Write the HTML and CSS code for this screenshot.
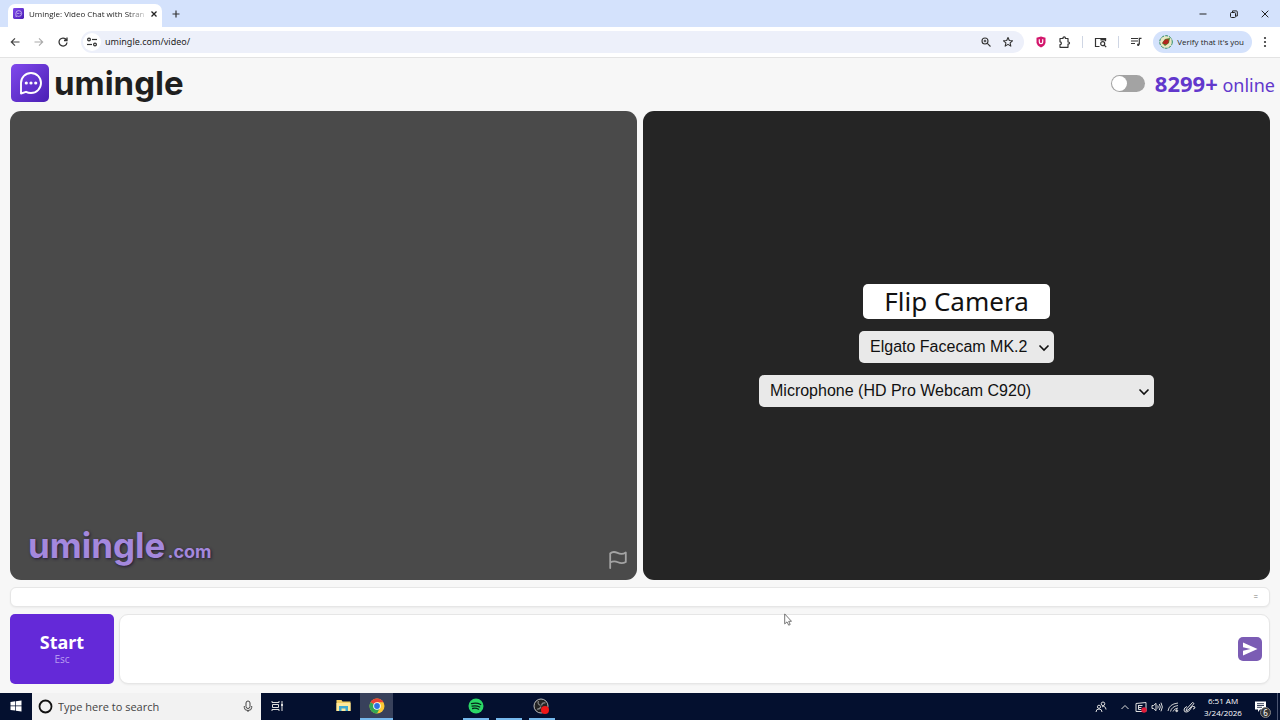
FILE: index.html
```html
<!DOCTYPE html>
<html lang="en">
<head>
<meta charset="utf-8">
<meta name="viewport" content="width=device-width, initial-scale=1">
<title>Umingle: Video Chat with Strangers</title>
<link rel="stylesheet" href="styles.css">
</head>
<body>
<svg class="defs" width="0" height="0" aria-hidden="true">
  <defs>
    <linearGradient id="brand" x1="0" y1="0" x2="1" y2="1"><stop offset="0" stop-color="#8049ec"/><stop offset="1" stop-color="#4a1fb4"/></linearGradient>
    <symbol id="logo" viewBox="0 0 38 38">
      <rect width="38" height="38" rx="5" fill="url(#brand)"/>
      <path d="M10 29.500V19a10 10 0 1 1 10 10c-2 0-3.500-.4-5-1.200z" fill="none" stroke="#fff" stroke-width="1.900" stroke-linejoin="round"/>
      <circle cx="15.300" cy="19" r="1.600" fill="#fff"/><circle cx="20" cy="19" r="1.600" fill="#fff"/><circle cx="24.700" cy="19" r="1.600" fill="#fff"/>
    </symbol>
  </defs>
</svg>

<header class="tabstrip">
  <div class="tab">
    <svg class="favicon" aria-hidden="true"><use href="#logo"/></svg>
    <span class="tab-title">Umingle: Video Chat with Stran</span>
    <button class="icon-btn tab-close" aria-label="Close tab"><svg width="8" height="8" viewBox="0 0 8 8"><path d="M1.500 1.500l5 5M6.500 1.500l-5 5" stroke="#222" stroke-width="1.300"/></svg></button>
  </div>
  <button class="icon-btn new-tab" aria-label="New tab"><svg width="10" height="10" viewBox="0 0 10 10"><path d="M5 1.500v7M1.500 5h7" stroke="#333" stroke-width="1.200"/></svg></button>
  <div class="window-controls">
    <button class="icon-btn" aria-label="Minimize"><svg width="10" height="10" viewBox="0 0 10 10"><path d="M1.500 5h7" stroke="#222"/></svg></button>
    <button class="icon-btn" aria-label="Restore"><svg width="10" height="10" viewBox="0 0 10 10" fill="none" stroke="#222"><rect x="1.500" y="3.500" width="5" height="5" rx="1"/><path d="M3.500 3V1.900h3.800a1 1 0 0 1 1 1V7H7"/></svg></button>
    <button class="icon-btn" aria-label="Close"><svg width="10" height="10" viewBox="0 0 10 10"><path d="M1.700 1.700l6.600 6.600M8.300 1.700L1.700 8.300" stroke="#222"/></svg></button>
  </div>
</header>

<nav class="toolbar" aria-label="Browser toolbar">
  <button class="icon-btn nav-btn" aria-label="Back"><svg width="12" height="12" viewBox="0 0 12 12" fill="none" stroke="#444" stroke-width="1.200"><path d="M10.500 6H2.500M6 2.300L2.300 6 6 9.700"/></svg></button>
  <button class="icon-btn nav-btn" aria-label="Forward"><svg width="12" height="12" viewBox="0 0 12 12" fill="none" stroke="#aaa" stroke-width="1.100"><path d="M1.500 6h8M6 2.300L9.700 6 6 9.700"/></svg></button>
  <button class="icon-btn nav-btn" aria-label="Reload"><svg width="12" height="12" viewBox="0 0 12 12" fill="none" stroke="#333" stroke-width="1.300"><path d="M9.400 3.900A4 4 0 1 0 10 6.500M10 1.500v3H7"/></svg></button>
  <div class="omnibox">
    <button class="icon-btn site-info" aria-label="Site information"><svg width="12" height="12" viewBox="0 0 12 12" fill="none" stroke="#333" stroke-width="1.200"><circle cx="3" cy="3.500" r="1.400"/><path d="M6 3.500h5"/><circle cx="9" cy="8.500" r="1.400"/><path d="M1 8.500h5"/></svg></button>
    <input class="url" type="text" aria-label="Address" value="umingle.com/video/">
    <button class="icon-btn" aria-label="Zoom"><svg width="12" height="12" viewBox="0 0 12 12" fill="none" stroke="#333" stroke-width="1.100"><circle cx="5" cy="5" r="3"/><path d="M7.300 7.300L10.500 10.500M5 3.700v2.600M3.700 5h2.600"/></svg></button>
    <button class="icon-btn" aria-label="Bookmark"><svg width="12" height="12" viewBox="0 0 12 12" fill="none" stroke="#333" stroke-width="1.100" stroke-linejoin="round"><path d="M6 1.500l1.300 3 3.200.3-2.400 2.100.7 3.200L6 8.400l-2.800 1.700.7-3.200L1.500 4.800l3.200-.3z"/></svg></button>
  </div>
  <div class="extensions">
    <button class="icon-btn" aria-label="U extension"><svg width="12" height="12" viewBox="0 0 12 12"><path d="M6 .5l4.500 1.300v4.700Q10 9.800 6 11.500 2 9.800 1.500 6.500V1.800z" fill="#d3176c"/><path d="M4.300 3.300v2.700a1.700 1.700 0 0 0 3.400 0V3.300" fill="none" stroke="#fff" stroke-width="1.200"/></svg></button>
    <button class="icon-btn" aria-label="Extensions"><svg width="13" height="13" viewBox="0 0 13 13" fill="none" stroke="#333" stroke-width="1.200" stroke-linejoin="round"><path d="M2 2.500h3V2a1.200 1.200 0 0 1 2.400 0v.5H10V6h.5a1 1 0 0 1 0 2H10v3.300H2V8.600a1.400 1.400 0 0 0 0-2.800z"/></svg></button>
    <span class="rule"></span>
    <button class="icon-btn" aria-label="Search in page"><svg width="13" height="13" viewBox="0 0 13 13" fill="none" stroke="#333" stroke-width="1.200"><path d="M5.500 10.500h-4v-8h10v2.800"/><path d="M7 2.500h4.500V4H7z" fill="#333"/><circle cx="8.700" cy="7.700" r="2"/><path d="M10.200 9.200l2 2"/></svg></button>
    <span class="rule"></span>
    <button class="icon-btn" aria-label="Media controls"><svg width="12" height="12" viewBox="0 0 12 12" fill="none" stroke="#333" stroke-width="1.200"><path d="M1 2.500h7M1 5h7M1 7.500h4M9.300 8.500V2.300h2.200"/><circle cx="8.200" cy="8.700" r="1.200" fill="#333" stroke="none"/></svg></button>
    <button class="verify"><svg width="14" height="14" viewBox="0 0 14 14"><circle cx="7" cy="7" r="6.300" fill="#e9e7c4" stroke="#2f8c68" stroke-dasharray="3 1"/><path d="M3 8l3-4 5-1-1 5-4 3z" fill="#4c842d"/><path d="M3.500 8.500q2-5 6-4 1 4-2.500 5z" fill="#b3261e"/></svg><span>Verify that it's you</span></button>
    <button class="icon-btn" aria-label="Menu"><svg width="4" height="12" viewBox="0 0 4 12" fill="#333"><circle cx="2" cy="2" r="1.100"/><circle cx="2" cy="6" r="1.100"/><circle cx="2" cy="10" r="1.100"/></svg></button>
  </div>
</nav>

<main class="app">
  <header class="site-header">
    <a class="brand" href="#"><svg class="brand-mark" aria-hidden="true"><use href="#logo"/></svg><span class="wordmark">umingle</span></a>
    <div class="status">
      <input class="switch" type="checkbox" role="switch" aria-label="Dark mode">
      <span class="online"><strong>8299+</strong> online</span>
    </div>
  </header>

  <section class="videos">
    <div class="video stranger">
      <span class="watermark">umingle<small>.com</small></span>
      <button class="icon-btn report" aria-label="Report"><svg width="18" height="18" viewBox="0 0 18 18" fill="none" stroke="#a3a3a3" stroke-width="1.800" stroke-linecap="round" stroke-linejoin="round"><path d="M1.200 17V2.500Q4-.2 8.500 1.900T16.800 1.500V11Q13 13.200 9 11.300T1.200 11.500"/></svg></button>
    </div>
    <div class="video self">
      <button class="flip">Flip Camera</button>
      <div class="picker">
        <select aria-label="Camera"><option>Elgato Facecam MK.2</option></select>
        <svg class="chevron" width="12" height="8" viewBox="0 0 12 8" aria-hidden="true"><path d="M1.500 1.500L6 6l4.500-4.500"/></svg>
      </div>
      <div class="picker picker-wide">
        <select aria-label="Microphone"><option>Microphone (HD Pro Webcam C920)</option></select>
        <svg class="chevron" width="12" height="8" viewBox="0 0 12 8" aria-hidden="true"><path d="M1.500 1.500L6 6l4.500-4.500"/></svg>
      </div>
    </div>
  </section>

  <section class="log" aria-label="Chat log"><button class="grip" aria-label="Resize chat">=</button></section>

  <form class="composer">
    <button class="start" type="button"><span class="start-label">Start</span><span class="start-key">Esc</span></button>
    <div class="message">
      <textarea aria-label="Message"></textarea>
      <button class="send" type="button" aria-label="Send"><svg width="16" height="14" viewBox="0 0 16 14"><path d="M1 .5L15.500 7 1 13.500V8.700L8.500 7 1 5.300z" fill="#fff"/></svg></button>
    </div>
  </form>
</main>

<footer class="taskbar">
  <button class="task start-menu" aria-label="Windows"><svg width="12" height="12" viewBox="0 0 12 12" fill="#fff"><path d="M.5 2l4.700-.7v4.300H.5zM5.900 1.200L11.500.4v5.200H5.900zM.5 6.300h4.700v4.300L.5 10zM5.900 6.300h5.600v5.200l-5.600-.8z"/></svg></button>
  <label class="search">
    <svg width="15" height="15" viewBox="0 0 15 15"><circle cx="7.500" cy="7.500" r="6" fill="none" stroke="#111" stroke-width="1.800"/></svg>
    <input type="text" placeholder="Type here to search" aria-label="Search">
    <svg width="10" height="13" viewBox="0 0 10 13" fill="none" stroke="#444"><rect x="3" y="1" width="4" height="7.500" rx="2"/><path d="M1.300 6v1.500a3.700 3 0 0 0 7.400 0V6M5 10.500V12"/></svg>
  </label>
  <div class="tasks">
    <button class="task" aria-label="Task view"><svg width="13" height="12" viewBox="0 0 13 12" fill="none" stroke="#ddd"><path d="M1 1v1.500h7V1M1 11V9.500h7V11M1.500 4.500h6v3h-6zM11 1v10"/><path d="M10 4h2v2h-2z" fill="#ddd" stroke="none"/></svg></button>
    <span class="task"></span>
    <button class="task" aria-label="File Explorer"><svg width="15" height="13" viewBox="0 0 15 13"><path d="M.5 1h5l1 1.500h8V12H.5z" fill="#f4cf62"/><path d="M.5 4h14v8H.5z" fill="#ffe99a"/><path d="M3 12V7h9v5h-2.500V9.500h-4V12z" fill="#3fa9d0"/></svg></button>
    <button class="task running active" aria-label="Chrome"><svg width="16" height="16" viewBox="0 0 16 16"><circle cx="8" cy="8" r="7.500" fill="#fcc934"/><path d="M8 8L1.500 4.250A7.500 7.500 0 0 1 14.500 4.250H8z" fill="#ea4335"/><path d="M8 8L1.500 4.250A7.500 7.500 0 0 0 8 15.500L11 9.700z" fill="#34a853"/><circle cx="8" cy="8" r="3.800" fill="#fff"/><circle cx="8" cy="8" r="2.900" fill="#2f73e0"/></svg></button>
    <span class="task"></span>
    <span class="task"></span>
    <button class="task running" aria-label="Spotify"><svg width="16" height="16" viewBox="0 0 16 16"><circle cx="8" cy="8" r="7.500" fill="#2bd866"/><path d="M3.500 5.700q5-1.400 9.200.8M4 8.200q4.200-1.100 7.700.8M4.600 10.500q3.200-.8 6 .7" fill="none" stroke="#06251a" stroke-width="1.300" stroke-linecap="round"/></svg></button>
    <span class="task running"></span>
    <button class="task running" aria-label="OBS"><svg width="17" height="16" viewBox="0 0 17 16"><circle cx="8" cy="8" r="7" fill="#222" stroke="#bbb"/><path d="M7.500 7.500Q4 6 5.500 3M8.500 7.500q1-3.500 4-2.500M8 8.500Q7 11.500 4 11" fill="none" stroke="#888" stroke-width="1.200"/><circle cx="12" cy="12" r="4" fill="#f01818"/></svg></button>
  </div>
  <div class="tray">
    <button class="tray-btn people" aria-label="People"><svg width="12" height="12" viewBox="0 0 12 12" fill="none" stroke="#ddd"><circle cx="8" cy="2.800" r="1.800"/><circle cx="4" cy="5.800" r="1.600"/><path d="M1 11q0-3 3-3t3 3M7 5.800q3.500-1.300 4 2.700"/></svg></button>
    <button class="tray-btn" aria-label="Show hidden icons"><svg width="10" height="8" viewBox="0 0 10 8" fill="none" stroke="#ddd"><path d="M1.500 6L5 2.500 8.500 6"/></svg></button>
    <button class="tray-btn" aria-label="Capture"><svg width="12" height="12" viewBox="0 0 12 12" fill="none" stroke="#ddd"><path d="M1 2.500l10-1v9H1zM3.500 4.500h4M3.500 6.500h3M3.500 4v4.500h3"/><circle cx="9" cy="9" r="2.700" fill="#e01b38" stroke="none"/></svg></button>
    <button class="tray-btn" aria-label="Volume"><svg width="12" height="12" viewBox="0 0 12 12" fill="none" stroke="#ddd"><path d="M1 4.500h1.500L5 2.300v7.400L2.500 7.500H1zM6.700 4.500q1 1.500 0 3M8.300 3q2 3 0 6M10 1.700q2.700 4.300 0 8.600"/></svg></button>
    <button class="tray-btn" aria-label="Network"><svg width="12" height="12" viewBox="0 0 12 12" fill="none" stroke="#ccc"><path d="M1 10Q2 3 11 2M3.500 10.500Q4.500 5.500 11 4.500M6 10.500Q7 7.500 11 7"/><circle cx="9.700" cy="9.700" r="1" fill="#ddd"/></svg></button>
    <button class="tray-btn" aria-label="Pen"><svg width="13" height="12" viewBox="0 0 13 12" fill="none" stroke="#ddd"><path d="M3.500 8L9.500 1.500l1.500 1L5.200 9 3 9.500zM4 5.500Q1 6.500 1 9t3 2q3-1 4-4t4-1q0 2-2 2"/></svg></button>
    <div class="clock"><time>6:51 AM</time><span>3/24/2026</span></div>
    <button class="tray-btn notices" aria-label="Notifications"><svg width="13" height="13" viewBox="0 0 13 13"><path d="M1 1.500h11v8H6L4 12V9.500H1z" fill="#fff"/><path d="M3 3.700h7M3 5.500h7M3 7.300h5" stroke="#06112f" stroke-width=".8"/></svg><span class="badge">6</span></button>
    <span class="peek"></span>
  </div>
</footer>

<svg class="pointer" width="8" height="13" viewBox="0 0 8 13" aria-hidden="true"><path d="M.7.900v10l2.300-2 1.700 3.300 1.500-.7-1.500-3.200h2.800z" fill="#fff" stroke="#666" stroke-width=".9"/></svg>
</body>
</html>
```
FILE: styles.css
```css
* { box-sizing: border-box; }

body {
  margin: 0;
  min-height: 100vh;
  display: flex;
  flex-direction: column;
  background: #f7f7f7;
  color: #1f1f1f;
  font-family: "Noto Sans", "Open Sans", sans-serif;
}

button, input, select, textarea { font: inherit; color: inherit; border: 0; margin: 0; padding: 0; background: none; }
svg { display: block; flex: none; }
.defs { position: absolute; }
.icon-btn { display: grid; place-items: center; flex: none; }

/* Browser frame */
.tabstrip {
  display: flex;
  align-items: center;
  height: 27px;
  padding: 0 10px 0 8px;
  background: #d4e2fc;
}
.tab {
  display: flex;
  align-items: center;
  align-self: flex-end;
  gap: 5px;
  width: 154px;
  height: 23px;
  padding: 0 6px 4px 5px;
  border-radius: 7px 7px 0 0;
  background: #fff;
}
.favicon { width: 11px; height: 11px; }
.tab-title {
  flex: 1;
  white-space: nowrap;
  font: 8px/12px "Open Sans", sans-serif;
  -webkit-mask-image: linear-gradient(90deg, #000 85%, #0003);
  mask-image: linear-gradient(90deg, #000 85%, #0003);
}
.new-tab { margin-left: 9px; }
.window-controls { display: flex; gap: 21px; margin-left: auto; }

.toolbar {
  display: flex;
  align-items: center;
  height: 31px;
  padding: 0 13px 0 9px;
  background: #fff;
  border-bottom: 1px solid #e3e3e3;
}
.nav-btn { width: 12px; margin-right: 12px; }
.omnibox {
  flex: 1;
  display: flex;
  align-items: center;
  gap: 10px;
  height: 22px;
  padding: 0 10px 0 2px;
  border-radius: 11px;
  background: #edf0fa;
}
.site-info { width: 18px; height: 18px; border-radius: 50%; background: #fff; }
.url { flex: 1; min-width: 0; margin-left: -6px; font-size: 9px; line-height: 14px; }
.extensions { display: flex; align-items: center; gap: 11px; padding-left: 11px; }
.rule { width: 1px; height: 12px; background: #cfd6e4; }
.verify {
  display: flex;
  align-items: center;
  gap: 4px;
  height: 22px;
  padding: 0 8px 0 6px;
  border-radius: 11px;
  background: #d4e2fc;
  font: 8px/12px "Open Sans", sans-serif;
  white-space: nowrap;
}

/* Page */
.app {
  flex: 1;
  display: flex;
  flex-direction: column;
  padding: 0 10px 9px;
}
.site-header {
  display: flex;
  align-items: center;
  justify-content: space-between;
  height: 53px;
  margin-right: -5px;
}
.brand { display: flex; align-items: center; gap: 5px; padding: 0 0 4px 1px; color: #1f1f1f; text-decoration: none; }
.brand-mark { width: 38px; height: 38px; }
.wordmark, .watermark { font-family: Inter, Lato, sans-serif; font-weight: 700; line-height: 40px; }
.wordmark { font-size: 33px; }
.status { display: flex; align-items: center; gap: 10px; padding-bottom: 2px; color: #6238cc; }
.switch {
  appearance: none;
  display: flex;
  align-items: center;
  width: 34px;
  height: 17px;
  padding: 1px;
  border-radius: 9px;
  background: #a3a3a3;
}
.switch::before { content: ""; width: 15px; height: 15px; border-radius: 50%; background: #fff; }
.switch:checked { justify-content: flex-end; background: #6429d8; }
.online { font-size: 18px; line-height: 26px; }
.online strong { font-size: 22px; }

.videos { flex: 1; display: grid; grid-template-columns: 1fr 1fr; gap: 6px; }
.video { display: flex; border-radius: 11px; }
.stranger {
  align-items: flex-end;
  justify-content: space-between;
  padding: 8px 10px 8px 18px;
  background: #4a4a4a;
}
.watermark { font-size: 35px; color: #a488dd; text-shadow: 1px 1px 3px #231b35; }
.watermark small { margin-left: 2px; font-size: 18px; }
.report { padding-bottom: 3px; }
.self {
  flex-direction: column;
  align-items: center;
  justify-content: center;
  gap: 12px;
  background: #252525;
}
.flip {
  height: 35px;
  padding: 0 21px;
  border-radius: 5px;
  background: #fff;
  color: #111;
  font-size: 26px;
  line-height: 35px;
}
.picker { position: relative; width: 195px; max-width: 100%; }
.picker-wide { width: 395px; }
.picker select {
  appearance: none;
  width: 100%;
  height: 32px;
  padding: 0 11px;
  border-radius: 5px;
  background: #e9e9e9;
  color: #111;
  font: 16px/20px "Liberation Sans", Arial, sans-serif;
}
.chevron { position: absolute; right: 4px; top: 13px; fill: none; stroke: #111; stroke-width: 1.6; pointer-events: none; }

.log, .message { background: #fff; border: 1px solid #e6e6e6; box-shadow: 0 1px 2px #0000000d; }
.log {
  display: flex;
  align-items: center;
  justify-content: flex-end;
  height: 20px;
  margin: 7px 0;
  padding: 0 11px;
  border-radius: 6px;
}
.grip { font-size: 8px; line-height: 10px; color: #777; }
.composer { display: flex; gap: 5px; }
.start {
  display: flex;
  flex-direction: column;
  align-items: center;
  justify-content: center;
  width: 104px;
  height: 70px;
  border-radius: 5px;
  background: #6429d8;
  color: #fff;
}
.start-label { font-size: 18px; font-weight: 700; line-height: 20px; }
.start-key { font-size: 10px; line-height: 14px; color: #b597ef; }
.message { flex: 1; display: flex; align-items: center; padding: 0 7px; border-radius: 9px; }
.message textarea { flex: 1; align-self: stretch; resize: none; outline: 0; padding: 8px; }
.send { display: grid; place-items: center; width: 24px; height: 24px; border-radius: 5px; background: #7b5cb4; }

/* Desktop taskbar */
.taskbar { display: flex; height: 27px; background: #04102f; color: #fff; }
.task { display: grid; place-items: center; width: 33px; height: 27px; border-bottom: 2px solid transparent; }
.start-menu { width: 32px; }
.search {
  display: flex;
  align-items: center;
  gap: 5px;
  width: 229px;
  padding: 0 8px 0 6px;
  background: #f2f2f2;
  color: #444;
}
.search input { flex: 1; min-width: 0; font: 11px/16px "Open Sans", sans-serif; }
.search input::placeholder { color: #444; opacity: 1; }
.tasks { display: flex; }
.running { background: linear-gradient(#76b9ed, #76b9ed) bottom / 26px 2px no-repeat border-box; }
.active { background-color: #38415b; background-size: 100% 2px; }
.tray { display: flex; align-items: center; margin-left: auto; }
.tray-btn { display: grid; place-items: center; width: 16px; height: 27px; }
.people { margin-right: 8px; }
.clock { display: flex; flex-direction: column; align-items: center; width: 52px; font: 8px/12px "Open Sans", sans-serif; }
.notices { position: relative; width: 22px; }
.badge {
  position: absolute;
  right: 0;
  bottom: 2px;
  width: 11px;
  height: 11px;
  border: 1px solid #888;
  border-radius: 50%;
  background: #333;
  font-size: 8px;
  line-height: 9px;
  text-align: center;
}
.peek { width: 1px; height: 27px; margin: 0 2px 0 6px; background: #4a5470; }

.pointer { position: absolute; left: 784px; top: 613px; }
```
